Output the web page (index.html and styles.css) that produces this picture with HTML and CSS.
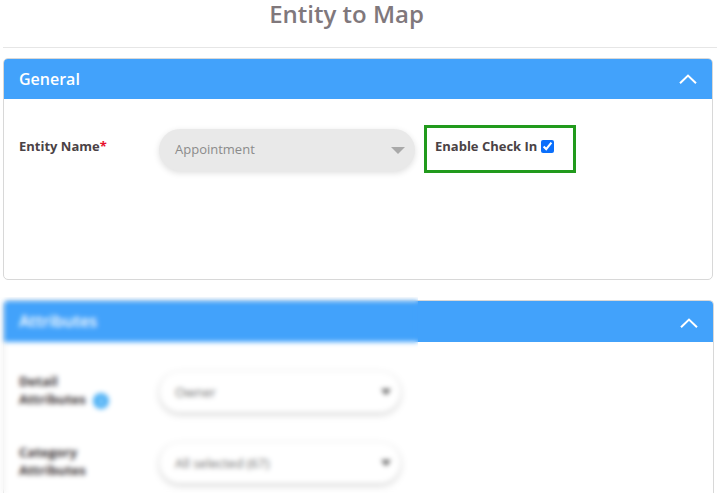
FILE: index.html
```html
<!DOCTYPE html>
<html lang="en">
<head>
<meta charset="utf-8">
<title>Entity to Map</title>
<link rel="stylesheet" href="styles.css">
</head>
<body>
<div class="page">
  <h1 class="title">Entity to Map</h1>
  <hr class="rule">
  <section class="card card-general">
    <header class="card-head">
      <span class="card-title">General</span>
      <svg class="chev" width="18" height="10" viewBox="0 0 18 10"><path d="M1 9.2 9 1.6l8 7.6" fill="none" stroke="#fff" stroke-width="2"/></svg>
    </header>
    <div class="card-body general-body">
      <label class="label label-entity">Entity Name<span class="req">*</span></label>
      <div class="select select-disabled">
        <span>Appointment</span>
        <i class="caret caret-big"></i>
      </div>
      <div class="highlight">
        <span class="label">Enable Check In</span>
        <input class="check" type="checkbox" checked>
      </div>
    </div>
  </section>
  <section class="card card-attrs">
    <header class="card-head head-attrs">
      <span class="card-title">Attributes</span>
      <svg class="chev" width="18" height="10" viewBox="0 0 18 10"><path d="M1 9.2 9 1.6l8 7.6" fill="none" stroke="#fff" stroke-width="2"/></svg>
    </header>
    <div class="card-body attrs-body">
      <div class="row">
        <div class="label label-wrap">Detail<br>Attributes <span class="info">i</span></div>
        <div class="select select-open"><span>Owner</span><i class="caret"></i></div>
      </div>
      <div class="row">
        <div class="label label-wrap">Category<br>Attributes</div>
        <div class="select select-open"><span>All selected (67)</span><i class="caret"></i></div>
      </div>
    </div>
  </section>
  <div class="blur-mask"></div>
</div>
</body>
</html>
```
FILE: styles.css
```css
* { box-sizing: border-box; }
html, body { margin: 0; padding: 0; height: 100%; overflow: hidden; background: #fff; }
body { font-family: "Open Sans", sans-serif; color: #3f3f46; }
.page { position: relative; width: 717px; height: 493px; overflow: hidden; padding-left: 3px; }
.title { margin: 0; height: 47px; padding: 0 27px 0 0; text-align: center; font-size: 24px; line-height: 27px; font-weight: 600; color: #80787c; }
.rule { margin: 0 0 10px; border: 0; height: 1px; background: #e6e6e6; }
.card { border: 1px solid #d8d8d8; border-radius: 5px; overflow: hidden; background: #fff; }
.card-general { width: 710px; height: 222px; }
.card-attrs { width: 711px; margin-top: 20px; height: 210px; border-bottom: 0; }
.card-head { display: flex; justify-content: space-between; align-items: center; height: 40px; padding: 0 15px 0 15px; background: #42a2fb; color: #fff; }
.head-attrs { height: 41px; padding-bottom: 1px; }
.head-attrs .chev { margin-top: 4px; }
.card-title { font-size: 16px; font-weight: 600; }
.chev { margin-top: 0; }
.label { font-size: 13px; font-weight: 700; color: #4a4245; }
.req { color: #e8112d; }
.general-body { display: flex; align-items: flex-start; padding: 30px 0 0 15px; }
.label-entity { width: 140px; margin-top: 8px; line-height: 18px; }
.select { display: flex; align-items: center; justify-content: space-between; border-radius: 21px; font-size: 13px; box-shadow: 0 2px 6px rgba(0,0,0,.13); }
.select-disabled { width: 256px; height: 42px; padding: 0 10px 2px 16px; background: #e9e9e9; color: #8b8b8b; }
.caret { display: block; width: 0; height: 0; border-left: 5px solid transparent; border-right: 5px solid transparent; border-top: 6px solid #555; }
.caret-big { margin-top: 2px; border-left-width: 7px; border-right-width: 7px; border-top-width: 7px; border-top-color: #a9a9a9; }
.highlight { display: flex; align-items: center; gap: 4px; width: 152px; height: 48px; margin: -4px 0 0 9px; padding: 0 0 7px 8px; border: 3px solid #219a1c; }
.check { width: 13px; height: 13px; margin: 2px 0 0; accent-color: #0b6ffb; }
.attrs-body { padding: 25px 0 0 15px; }
.row { display: flex; align-items: flex-start; height: 71px; }
.label-wrap { width: 141px; line-height: 18px; padding-top: 5px; font-size: 13px; color: #3a3335; }
.info { display: inline-block; width: 16px; height: 16px; margin-left: 4px; border-radius: 50%; background: #4cb0f5; color: #d8effd; font-size: 10px; line-height: 16px; text-align: center; vertical-align: middle; }
.select-open { width: 240px; height: 40px; margin-top: 5px; padding: 0 9px 0 15px; background: #fff; color: #6e6e6e; box-shadow: 0 2px 6px rgba(0,0,0,.2); }
.blur-mask { position: absolute; left: 0; top: 297px; width: 418px; height: 196px; -webkit-backdrop-filter: blur(2.5px); backdrop-filter: blur(2.5px); }
```
